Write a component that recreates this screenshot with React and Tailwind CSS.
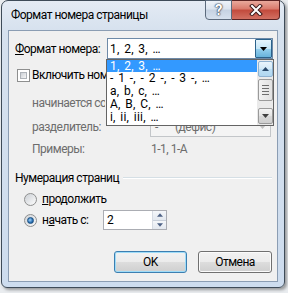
import React from "react";

const font = "font-['Roboto','Noto_Sans',sans-serif] tracking-[-0.5px]";

function Checkbox() {
  return (
    <div className="w-[13px] h-[13px] border border-[#8e8f8f] bg-white p-[2px] shrink-0">
      <div className="w-full h-full bg-gradient-to-br from-[#cbcfd5] to-[#f6f6f6] border border-[#aeb3b9]" />
    </div>
  );
}

function Radio({ checked }) {
  return (
    <div className="w-[13px] h-[13px] rounded-full border border-[#8e8f8f] bg-gradient-to-br from-[#d0d4d9] to-[#f8f8f8] flex items-center justify-center shrink-0">
      {checked ? (
        <div className="w-[7px] h-[7px] rounded-full bg-[radial-gradient(circle_at_40%_40%,#9fd3f7,#2a6fb4_60%,#134a7c)] border border-[#1b4f80]" />
      ) : (
        <div className="w-[9px] h-[9px] rounded-full bg-gradient-to-br from-[#cfd3d8] to-[#fafafa]" />
      )}
    </div>
  );
}

function Button({ children, focused }) {
  return (
    <div
      className={
        "h-[22px] rounded-[3px] border flex items-center justify-center text-[12px] text-black bg-[linear-gradient(#f2f2f2,#ebebeb_50%,#dddddd_50%,#cfcfcf)] " +
        (focused
          ? "border-[#3c7fb1] shadow-[inset_0_0_0_1px_#9fdcf8]"
          : "border-[#707070] shadow-[inset_0_0_0_1px_#fbfbfb]")
      }
    >
      {children}
    </div>
  );
}

function ArrowDown({ color = "#000", w = 7 }) {
  return (
    <svg width={w} height="4" viewBox="0 0 7 4">
      <path d="M0 0 H7 L3.5 4 Z" fill={color} />
    </svg>
  );
}
function ArrowUp({ color = "#000", w = 7 }) {
  return (
    <svg width={w} height="4" viewBox="0 0 7 4">
      <path d="M0 4 H7 L3.5 0 Z" fill={color} />
    </svg>
  );
}

export default function App() {
  return (
    <div className={"w-[288px] h-[293px] bg-[#e9ecef] overflow-hidden " + font}>
      <div className="relative ml-[1px] w-[284px] h-[288px] rounded-t-[7px] rounded-b-[6px] border border-[#3e4b58] bg-[linear-gradient(#e4ebf4,#d6e1ee_30px,#cddcee)] shadow-[2px_2px_3px_rgba(0,0,0,0.35)] flex flex-col px-[6px] pb-[5px]">
        {/* title bar */}
        <div className="h-[29px] flex items-center pl-[3px] pb-[1px] shrink-0">
          <span className="text-[12px] text-black whitespace-nowrap">Формат номера страницы</span>
        </div>
        {/* caption buttons */}
        <div className="absolute top-[-1px] right-[4px] flex">
          <div className="w-[27px] h-[20px] rounded-bl-[4px] border border-[#5c6b7d] bg-[linear-gradient(#eef3f9,#dbe4ef_45%,#c5d2e2_50%,#d6e1ee)] flex items-center justify-center">
            <span className="text-[15px] font-bold text-white leading-none [text-shadow:0_0_1px_#303a48,0_0_1px_#303a48,0_0_2px_#303a48]">?</span>
          </div>
          <div className="w-[48px] h-[20px] rounded-br-[4px] border border-l-0 border-[#5a2222] bg-[linear-gradient(#e9a99c,#d9796b_45%,#c24a3c_50%,#d27062)] flex items-center justify-center">
            <svg width="14" height="12" viewBox="0 0 14 12">
              <path d="M3 2 L11 10 M11 2 L3 10" stroke="#3b1a1a" strokeWidth="4" strokeLinecap="square" />
              <path d="M3 2 L11 10 M11 2 L3 10" stroke="#fff" strokeWidth="2" strokeLinecap="square" />
            </svg>
          </div>
        </div>

        {/* client area */}
        <div className="relative flex-1 bg-[#f0f0f0] border border-[#8b9db3] flex flex-col text-[12px] text-black whitespace-nowrap">
          {/* row: format */}
          <div className="mt-[7px] h-[21px] flex items-center">
            <span className="ml-[6px] w-[92px]">
              <span className="underline">Ф</span>ормат номера:
            </span>
            <div className="w-[166px] h-[21px] border border-[#6e8aa8] bg-white flex items-center">
              <span className="ml-[2px] flex-1 tracking-[0.2px] [word-spacing:1.5px]">1, 2, 3, …</span>
              <div className="w-[17px] h-[19px] border border-[#2c628b] rounded-[1px] bg-[linear-gradient(#e5f4fc,#c4e5f6_50%,#98d1ef_50%,#68b3db)] flex items-center justify-center">
                <ArrowDown />
              </div>
            </div>
          </div>

          {/* checkbox row */}
          <div className="mt-[8px] h-[16px] flex items-center">
            <div className="ml-[8px]">
              <Checkbox />
            </div>
            <span className="ml-[2px] w-[75px] overflow-hidden">Включить номер главы</span>
          </div>

          {/* starts with */}
          <div className="mt-[12px] h-[16px] flex items-center text-[#6d6d6d]">
            <span className="ml-[23px] w-[73px] overflow-hidden">начинается со стиля:</span>
          </div>

          {/* separator */}
          <div className="mt-[6px] h-[20px] flex items-center text-[#6d6d6d]">
            <span className="ml-[23px] w-[118px]">разделитель:</span>
            <div className="w-[121px] h-[20px] border border-[#c3c6c9] bg-[#f4f4f4] flex items-center">
              <span className="ml-[4px] w-[20px]">-</span>
              <span className="flex-1">(дефис)</span>
              <div className="w-[15px] flex justify-center">
                <ArrowDown color="#c0c0c0" />
              </div>
            </div>
          </div>

          {/* examples */}
          <div className="mt-[4px] h-[16px] flex items-center text-[#6d6d6d]">
            <span className="ml-[23px] w-[119px]">Примеры:</span>
            <span>1-1, 1-А</span>
          </div>

          {/* group header */}
          <div className="mt-[13px] h-[16px] flex items-center">
            <span className="ml-[6px] mr-[4px]">Нумерация страниц</span>
            <div className="flex-1 mr-[5px] h-[2px] border-t border-[#d5dfe5] border-b border-b-white" />
          </div>

          {/* radio continue */}
          <div className="mt-[5px] h-[16px] flex items-center">
            <div className="ml-[15px]">
              <Radio />
            </div>
            <span className="ml-[5px]">
              <span className="underline">п</span>родолжить
            </span>
          </div>

          {/* radio start */}
          <div className="mt-[3px] h-[20px] flex items-center">
            <div className="ml-[15px]">
              <Radio checked />
            </div>
            <span className="ml-[5px] w-[61px]">
              н<span className="underline">а</span>чать с:
            </span>
            <div className="w-[64px] h-[20px] border border-[#abadb3] bg-white flex items-center">
              <span className="ml-[3px] flex-1">2</span>
              <div className="w-[14px] h-[18px] flex flex-col border-l border-[#d6dbe3]">
                <div className="flex-1 bg-[linear-gradient(#f5f7fa,#e3e8ef)] border-b border-[#c8cfd9] flex items-center justify-center">
                  <ArrowUp color="#4d6185" w={6} />
                </div>
                <div className="flex-1 bg-[linear-gradient(#f5f7fa,#e3e8ef)] flex items-center justify-center">
                  <ArrowDown color="#4d6185" w={6} />
                </div>
              </div>
            </div>
          </div>

          {/* buttons */}
          <div className="mt-[21px] flex justify-end gap-[11px] mr-[5px]">
            <div className="w-[73px]">
              <Button focused>OK</Button>
            </div>
            <div className="w-[74px]">
              <Button>Отмена</Button>
            </div>
          </div>

          {/* dropdown list overlay */}
          <div className="absolute left-[97px] top-[28px] w-[168px] h-[67px] border border-[#646464] bg-white flex tracking-[0.2px] [word-spacing:1.5px]">
            <div className="flex-1 flex flex-col">
              <div className="h-[12px] bg-[#3399ff] text-white flex items-center pl-[3px] leading-[12px]">1, 2, 3, …</div>
              <div className="h-[13px] flex items-center pl-[3px] leading-[13px]">- 1 -, - 2 -, - 3 -, …</div>
              <div className="h-[13px] flex items-center pl-[3px] leading-[13px]">a, b, c, …</div>
              <div className="h-[13px] flex items-center pl-[3px] leading-[13px]">A, B, C, …</div>
              <div className="h-[13px] flex items-center pl-[3px] leading-[13px]">i, ii, iii, …</div>
            </div>
            <div className="w-[16px] bg-[#eaeaea] flex flex-col items-center py-[1px] gap-[2px]">
              <div className="w-[15px] h-[16px] rounded-[2px] border border-[#8fb2d1] bg-[linear-gradient(#eaf5fc,#d2e9f7_50%,#bddff4_50%,#b1d7f0)] flex items-center justify-center">
                <ArrowUp color="#2b4a6b" />
              </div>
              <div className="w-[15px] h-[22px] rounded-[2px] border border-[#9a9a9a] bg-[linear-gradient(90deg,#f3f3f3,#e2e2e2)] flex flex-col items-center justify-center gap-[2px]">
                <div className="w-[7px] h-[1px] bg-[#6f6f6f]" />
                <div className="w-[7px] h-[1px] bg-[#6f6f6f]" />
                <div className="w-[7px] h-[1px] bg-[#6f6f6f]" />
                <div className="w-[7px] h-[1px] bg-[#6f6f6f]" />
              </div>
              <div className="flex-1" />
              <div className="w-[15px] h-[16px] rounded-[2px] border border-[#9a9a9a] bg-[linear-gradient(#f4f4f4,#e4e4e4_50%,#d9d9d9_50%,#cfcfcf)] flex items-center justify-center">
                <ArrowDown color="#404040" />
              </div>
            </div>
          </div>
        </div>
      </div>
    </div>
  );
}
